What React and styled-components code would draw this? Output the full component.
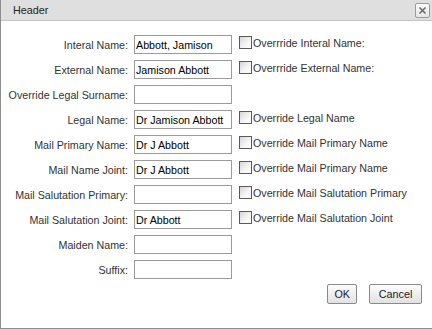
import React from "react";
import styled, { createGlobalStyle } from "styled-components";

const Global = createGlobalStyle`
  html, body { margin: 0; padding: 0; background: #fff; }
  body { font-family: "Liberation Sans", Arial, sans-serif; font-size: 10.7px; }
`;

const Dialog = styled.div`
  width: 432px;
  height: 329px;
  box-sizing: border-box;
  border-left: 1px solid #8e8e8e;
  border-bottom: 1px solid #8e8e8e;
  display: flex;
  flex-direction: column;
  background: #fff;
`;

const TitleBar = styled.div`
  height: 20px;
  background: #dfdfdf;
  border-bottom: 1px solid #c4c4c4;
  display: flex;
  align-items: center;
  justify-content: space-between;
  padding: 0 2px 0 12px;
  color: #222;
  font-size: 10.8px;
`;

const CloseButton = styled.button`
  width: 15px;
  height: 15px;
  padding: 0;
  margin: 0;
  border: 1px solid #9a9a9a;
  border-radius: 2px;
  background: linear-gradient(#fbfbfb, #e6e6e6);
  display: flex;
  align-items: center;
  justify-content: center;
`;

const Form = styled.div`
  display: grid;
  grid-template-columns: 127px 98px auto;
  grid-auto-rows: 19px;
  column-gap: 6px;
  row-gap: 6px;
  padding-top: 14px;
  align-items: center;
`;

const Label = styled.label`
  text-align: right;
  color: #333;
  white-space: nowrap;
`;

const Input = styled.input`
  box-sizing: border-box;
  width: 98px;
  height: 19px;
  margin: 0;
  padding: 0 1px;
  border: 1px solid #9b9b9b;
  font-family: "Liberation Sans", Arial, sans-serif;
  font-size: 10.7px;
  color: #000;
  outline: none;
`;

const Check = styled.label`
  display: flex;
  align-items: center;
  align-self: start;
  margin-top: 1px;
  color: #333;
  white-space: nowrap;
`;

const Box = styled.span`
  box-sizing: border-box;
  width: 13px;
  height: 13px;
  margin-left: 1px;
  margin-right: 1px;
  border: 1px solid #5a5a5a;
  background: linear-gradient(135deg, #d6d6d6 0%, #f4f4f4 55%, #ffffff 100%);
`;

const Footer = styled.div`
  display: flex;
  justify-content: flex-end;
  gap: 12px;
  padding: 5px 10px 0 0;
`;

const Button = styled.button`
  box-sizing: border-box;
  height: 20px;
  padding: 0 ${(p) => (p.$wide ? "8px" : "6px")};
  min-width: ${(p) => (p.$wide ? "53px" : "27px")};
  margin: 0;
  border: 1px solid #8a8a8a;
  border-radius: 2px;
  background: linear-gradient(#fdfdfd, #e2e2e2);
  font-family: "Liberation Sans", Arial, sans-serif;
  font-size: 10.8px;
  color: #222;
`;

const rows = [
  { label: "Interal Name:", value: "Abbott, Jamison", check: "Overrride Interal Name:" },
  { label: "External Name:", value: "Jamison Abbott", check: "Overrride External Name:" },
  { label: "Override Legal Surname:", value: "" },
  { label: "Legal Name:", value: "Dr Jamison Abbott", check: "Override Legal Name" },
  { label: "Mail Primary Name:", value: "Dr J Abbott", check: "Override Mail Primary Name" },
  { label: "Mail Name Joint:", value: "Dr J Abbott", check: "Override Mail Primary Name" },
  { label: "Mail Salutation Primary:", value: "", check: "Override Mail Salutation Primary" },
  { label: "Mail Salutation Joint:", value: "Dr Abbott", check: "Override Mail Salutation Joint" },
  { label: "Maiden Name:", value: "" },
  { label: "Suffix:", value: "" },
];

export default function App() {
  return (
    <>
      <Global />
      <Dialog>
        <TitleBar>
          <span>Header</span>
          <CloseButton aria-label="close">
            <svg width="9" height="9" viewBox="0 0 9 9">
              <path d="M1.5 1.5 L7.5 7.5 M7.5 1.5 L1.5 7.5" stroke="#6a6a6a" strokeWidth="1.6" />
            </svg>
          </CloseButton>
        </TitleBar>
        <Form>
          {rows.map((r, i) => (
            <React.Fragment key={i}>
              <Label>{r.label}</Label>
              <Input defaultValue={r.value} />
              {r.check ? (
                <Check>
                  <Box />
                  {r.check}
                </Check>
              ) : (
                <span />
              )}
            </React.Fragment>
          ))}
        </Form>
        <Footer>
          <Button>OK</Button>
          <Button $wide>Cancel</Button>
        </Footer>
      </Dialog>
    </>
  );
}
